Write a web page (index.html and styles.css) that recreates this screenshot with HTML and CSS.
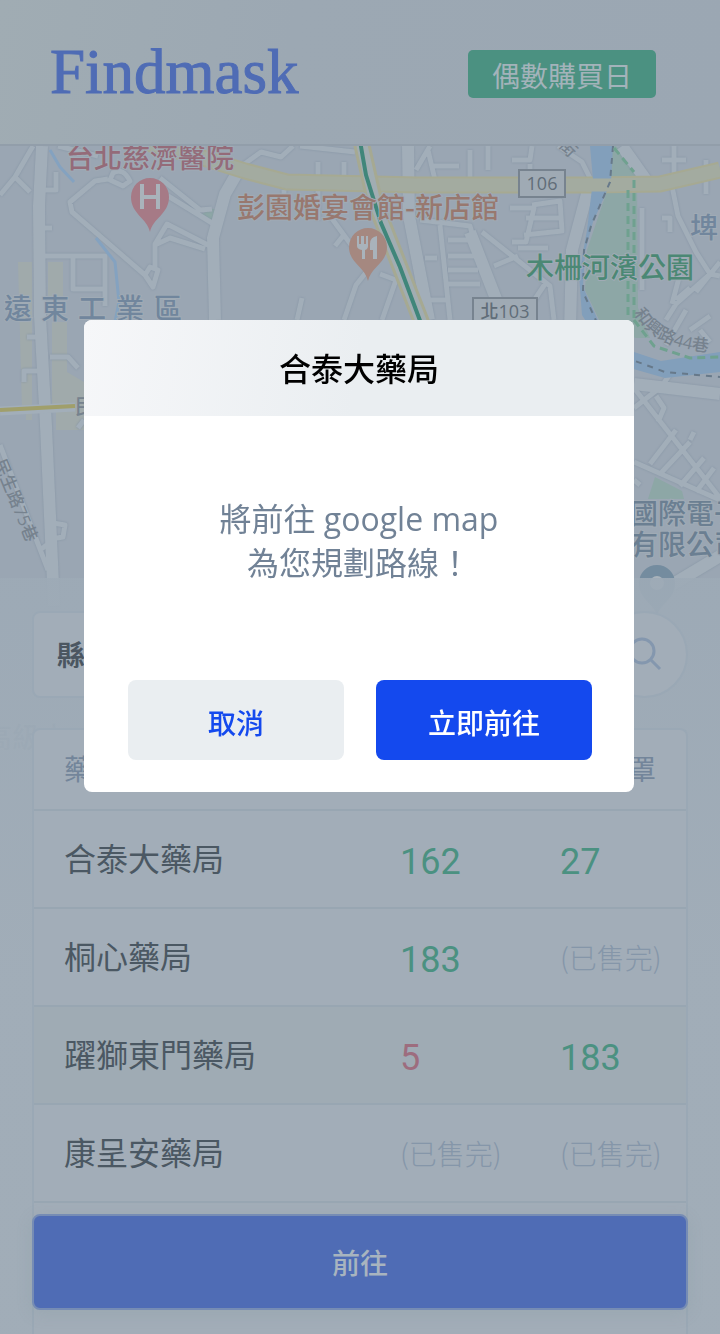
FILE: index.html
```
<!DOCTYPE html>
<html lang="zh-Hant">
<head>
<meta charset="utf-8">
<meta name="viewport" content="width=device-width, initial-scale=1">
<title>Findmask</title>
<link rel="stylesheet" href="styles.css">
</head>
<body>
<div class="app">
  <header class="topbar">
    <h1 class="brand">Findmask</h1>
    <span class="badge">偶數購買日</span>
  </header>
  <main class="stage">
    <svg class="map" viewBox="0 146 720 1188" preserveAspectRatio="xMidYMin slice" aria-label="地圖">
      <rect class="land" x="0" y="146" width="720" height="1188"/>
      <g class="patch">
        <path d="M18 262h14v158h-6v-10h-4zM48 262h15v38h-15zM52 322h15v50l17 10v48H56v-26h-4z"/>
      </g>
      <path class="park" d="M612 146h4l24 30h-3l1 132 12 30-14 0-34-12-17-36 2-40 22-65z"/>
      <path class="park" d="M197 217l13-8h5l-2 14zM655 477l27 14 2 8h-36z"/>
      <g class="roads">
        <g class="casing">
          <path d="M33 146L15 177 0 195M15 177l15 15M38 190h18v-18M38 228h14M58 146l40 10M108 179l-13 2-25 21 2 10 73 63 8 12 5-17-8-3-5 8M155 268v-24l12-20 43 22M155 245l15-7 35 11M113 173q10-6 17 8l-7 5-13-6zM160 178l40 32 12-1M168 196l44 27M45 256h60v50M73 258v31h30M27 337h14M50 357h18l10 11M24 382v-11h18M40 550l12-9 1-18 12 2-2 12-12 2M0 445l48 125M78 428l6-8"/>
          <path d="M243 165l18-13 20 5 12-11M318 162v58M344 162v22M284 190v28M330 216l22 30M335 246l8-10M368 270l-12 15-12 35M380 274l16 6-14 40M302 298l-5 22M430 146l-14 24M428 150l7 30M433 166h26M470 150v34M300 146l55 6M420 220l50 6 8 28M440 225l10 95M448 240h24M448 256h26M448 270h30M448 284h32M425 258h12M430 300h16M488 146v24M512 160h18l2-14M530 184v-20M510 208h24l-8 34h-14M532 205l28-4 2 30-38 4M526 218h36M518 248h30M482 232l68 54 4 34M494 266l24-10M545 284l-16 24M558 146l24 16 8 16M642 208v82M674 146v38M662 160h24M706 160v34M672 186l6 30 18 36 14 22 10 2M710 274l-34 30-10 16M680 274l-8 30M662 218h8v14M720 262l-24 30M690 288l-14 12"/>
          <path d="M634 388l86 110M634 408l28-22 8-12M656 396l8 12-6 14M634 462l86 38M676 430l-26 34M690 442l-30 32M704 458l-24 28M714 468l-18 24M690 440l4-8M634 480l6 5M690 330l20-14M700 330l10 12M666 345l20-35"/>
        </g>
        <g class="wide">
          <path d="M42 146l-3 60 1 110 6 110 8 180M240 168l-15 26-12 44 2 82M408 146l1 70 20 104M470 232l35 90M588 190l-16 60-2 80M622 146l24 34M634 384l86 10M720 556l-50 30"/>
        </g>
      </g>
      <path class="highway-edge" d="M140 141l60 16 45 14 42 11 130 3h172l71-1 60-14"/>
      <path class="highway" d="M140 141l60 16 45 14 42 11 130 3h172l71-1 60-14"/>
      <path class="highway-edge" d="M361 141l14 62 48 123"/>
      <path class="highway-mid" d="M361 141l14 62 48 123"/>
      <path class="rail" d="M360 141l6 34 15 48 19 44 22 59"/>
      <path class="lane-bg" d="M0 411l75-4"/><path class="lane" d="M0 410l75-4"/>
      <path class="stream" d="M50 150l10 17 14 15M96 238l19 24 4 40-4 20"/>
      <path class="river" d="M590 146h23l-2 36-18 40-8 30-2 35 18 40 30 24 30 10 59-9v20l-55 6-35-10-30-25-18-28-3-40 8-45 6-50z"/>
      <path class="highway" d="M586 185h34"/>
      <path class="river-dash" d="M613 146l-3 36-19 44-7 24-1 42 15 33 37 36 30 11 55 5"/>
      <path class="path-dash" d="M614 148l20 24M628 190v130M634 180v140M634 320l20 26 36 12 30-1"/>
      <g class="shield">
        <rect x="519" y="170" width="46" height="27"/>
        <rect x="473" y="298" width="64" height="27"/>
        <text x="542" y="190">106</text>
        <text x="505" y="318">北103</text>
      </g>
      <g class="pin pin-hospital">
        <path d="M150 232c-3-14-19-18-19-35a19 19 0 0 1 38 0c0 17-16 21-19 35z"/>
        <path class="glyph-line" d="M142 184v25M158 184v25M142 197h16"/>
      </g>
      <g class="pin pin-food">
        <path d="M368 281c-3-14-19-18-19-34a19 19 0 0 1 38 0c0 16-16 20-19 34z"/>
        <path class="glyph" d="M357 236h2v8h2v-8h3v8h2v-8h2v10q0 3-3 4v9h-3v-9q-5-1-5-4zM370 244q0-7 7-8v23h-4v-9h-3z"/>
      </g>
      <g class="pin pin-place">
        <path d="M657 616c-3-13-18-16-18-33a18 18 0 0 1 36 0c0 17-15 20-18 33z"/>
        <circle class="glyph" cx="657" cy="583" r="7"/>
      </g>
      <g class="label">
        <text class="red" x="66" y="168">台北慈濟醫院</text>
        <text class="orange" x="237" y="218">彭園婚宴會館-新店館</text>
        <text class="green" x="526" y="278">木柵河濱公園</text>
        <text class="slate" x="4 41 78 116 154" y="319">遠東工業區</text>
        <text class="slate" x="690" y="238">埤</text>
        <text class="dark" x="630" y="524">國際電子</text>
        <text class="dark" x="630" y="555">有限公司</text>
        <text class="dark" x="-16" y="748">高級中</text>
      </g>
      <g class="street">
        <path id="curve" class="guide" d="M634 313Q656 352 720 352"/>
        <text><textPath href="#curve">和興路44巷</textPath></text>
        <text transform="translate(-6 462) rotate(68)">民生路75巷</text>
        <text transform="translate(558 146) rotate(45)">街</text>
        <text class="street-big" x="75" y="414">民</text>
      </g>
    </svg>
    <section class="panel">
      <form class="filters">
        <select class="city" aria-label="縣市"><option>縣市</option></select>
        <button class="search" type="button" aria-label="搜尋">
          <svg viewBox="0 0 40 40" aria-hidden="true"><circle cx="17" cy="16" r="12"/><path d="M26 25l9 9"/></svg>
        </button>
      </form>
      <div class="card">
        <table class="stores">
          <thead><tr><th>藥局</th><th class="count">成人口罩</th><th class="count">兒童口罩</th></tr></thead>
          <tbody>
            <tr><td>合泰大藥局</td><td class="num">162</td><td class="num">27</td></tr>
            <tr><td>桐心藥局</td><td class="num">183</td><td class="none">(已售完)</td></tr>
            <tr class="active"><td>躍獅東門藥局</td><td class="num low">5</td><td class="num">183</td></tr>
            <tr><td>康呈安藥局</td><td class="none">(已售完)</td><td class="none">(已售完)</td></tr>
          </tbody>
        </table>
      </div>
    </section>
  </main>
  <button class="go" type="button">前往</button>
</div>
<div class="overlay">
  <section class="dialog" role="dialog" aria-modal="true" aria-labelledby="dialog-title">
    <h2 class="dialog-title" id="dialog-title">合泰大藥局</h2>
    <p class="dialog-text">將前往 google map<br>為您規劃路線！</p>
    <div class="actions">
      <button class="btn cancel" type="button">取消</button>
      <button class="btn confirm" type="button">立即前往</button>
    </div>
  </section>
</div>
</body>
</html>
```
FILE: styles.css
```
* { box-sizing: border-box; }
body {
  margin: 0;
  font-family: "Open Sans", "Noto Sans CJK TC", sans-serif;
  background: #a1adb7;
}
button, select { font: inherit; border: 0; padding: 0; }
.app {
  position: relative;
  min-height: 100vh;
  display: flex;
  flex-direction: column;
}
.topbar {
  display: flex;
  align-items: flex-start;
  justify-content: space-between;
  height: 146px;
  padding: 50px 64px 0 50px;
  background: linear-gradient(100deg, #a0acb3, #9ca8b3 40%, #9ba7b3);
  border-bottom: 2px solid #929eaa;
}
.brand {
  margin: 0;
  font: 400 63px/44px "Liberation Serif", serif;
  color: #4f6cb5;
  -webkit-text-stroke: 1px #4f6cb5;
}
.badge {
  height: 48px;
  padding: 0 24px;
  border-radius: 5px;
  background: #4b9181;
  color: #a3b3ba;
  font-family: "Noto Sans CJK TC", sans-serif;
  font-size: 28px;
  line-height: 50px;
}

/* Map */
.stage {
  position: relative;
  flex: 1;
  display: flex;
  flex-direction: column;
  padding-top: 432px;
}
.map {
  position: absolute;
  inset: 0;
  width: 100%;
  height: 100%;
}
.map path { fill: none; stroke-linejoin: round; }
.map .land { fill: #9aa6b3; }
.map .patch path { fill: #a0aaab; }
.map .park { fill: #8da7a6; }
.roads { filter: drop-shadow(0 0 1px #8493a3); }
.casing path { stroke: #a2aeb9; stroke-width: 5; }
.wide path { stroke: #a2aeb9; stroke-width: 12; }
.map .highway-edge { stroke: #a6a992; stroke-width: 17; }
.map .highway { stroke: #a3aba0; stroke-width: 13; }
.map .highway-mid { stroke: #a1adb2; stroke-width: 11; }
.map .rail { stroke: #40867a; stroke-width: 4; }
.map .lane-bg { stroke: #a2aeb9; stroke-width: 9; }
.map .lane { stroke: #a09f6b; stroke-width: 4; }
.map .stream { stroke: #84a2c0; stroke-width: 3; }
.map .river { fill: #829fbb; }
.map .river-dash { stroke: #67798a; stroke-width: 2; stroke-dasharray: 6 6; }
.map .path-dash { stroke: #6fa18f; stroke-width: 3; stroke-dasharray: 8 5; }
.shield rect { fill: #9faab4; stroke: #77838f; stroke-width: 2; }
.shield text {
  fill: #616d78;
  font-size: 18px;
  font-weight: 500;
  text-anchor: middle;
}
.map .pin-hospital path { fill: #a67a86; }
.map .pin-food path { fill: #a58880; }
.map .pin-place path { fill: #748c9f; }
.map .pin .glyph { fill: #a9b3bb; }
.map .pin .glyph-line { fill: none; stroke: #a9b3bb; stroke-width: 4; }
.label { font-size: 28px; font-weight: 500; font-family: "Noto Sans CJK TC", sans-serif; }
.label text { paint-order: stroke; stroke: #a0abb5; stroke-width: 2px; }
.label .red { fill: #946b79; }
.label .orange { fill: #98786f; }
.label .green { fill: #4b8874; }
.label .slate { fill: #71869d; }
.label .dark { fill: #6b7f92; }
.street { fill: #76828e; font-size: 17px; font-weight: 500; }
.street .street-big { font-size: 20px; }

/* Search and results */
.panel {
  position: relative;
  flex: 1;
  display: flex;
  flex-direction: column;
  gap: 32px;
  padding: 33px 32px 0;
  background: linear-gradient(rgba(157, 170, 182, .92), rgba(161, 173, 184, .98) 400px);
}
.filters { display: flex; justify-content: space-between; gap: 24px; }
.city {
  flex: 0 1 540px;
  height: 87px;
  padding: 0 23px;
  border: 2px solid #9aa8b5;
  border-radius: 8px;
  background: #a2adb8;
  color: #4b5661;
  font-size: 28px;
  font-weight: 700;
  appearance: none;
}
.search {
  width: 87px;
  height: 87px;
  border: 2px solid #9aa8b5;
  border-radius: 50%;
  background: #a2adb8;
}
.search svg {
  display: block;
  width: 40px;
  height: 40px;
  margin: 0 auto;
  fill: none;
  stroke: #8497ae;
  stroke-width: 3;
}
.card {
  flex: 1;
  margin-top: -2px;
  border: 2px solid #9aa8b5;
  border-bottom: 0;
  border-radius: 8px 8px 0 0;
  background: #a2adb8;
}
.stores {
  width: 100%;
  border-collapse: collapse;
  table-layout: fixed;
  font-family: "Noto Sans CJK TC", sans-serif;
  font-size: 32px;
  line-height: 48px;
  color: #4b5863;
}
.stores th, .stores td {
  height: 98px;
  padding: 0 0 4px;
  border-bottom: 2px solid #98a6b2;
  text-align: left;
}
.stores th { height: 80px; font-size: 28px; font-weight: 400; color: #73859a; white-space: nowrap; }
.stores th:first-child, .stores td:first-child { padding-left: 30px; }
.stores .count { width: 160px; }
.stores .count:last-child { width: 126px; padding-right: 30px; direction: rtl; text-align: right; }
.active { background: #9fabb4; }
.stores .num { padding: 6px 0 0; font-family: Roboto, sans-serif; font-size: 36px; color: #4b9181; }
.stores .low { color: #9d6d7e; }
.stores .none { padding: 0; font-size: 28px; font-weight: 300; color: #8596a9; white-space: nowrap; }
.go {
  position: absolute;
  left: 32px;
  right: 32px;
  bottom: 24px;
  height: 96px;
  border: 2px solid #768cb4;
  border-radius: 8px;
  background: #4f6cb5;
  color: #a8b4bf;
  font-size: 28px;
  font-weight: 500;
  box-shadow: 0 4px 16px rgba(120, 145, 150, .2);
}

/* Dialog */
.overlay {
  position: fixed;
  inset: 0;
  padding: 320px 86px 0 84px;
}
.dialog {
  overflow: hidden;
  border-radius: 8px;
  background: #fff;
}
.dialog-title {
  margin: 0;
  padding-top: 2px;
  background: linear-gradient(100deg, #f6f7f9, #eaeef1 50%);
  color: #000;
  font-size: 32px;
  font-weight: 500;
  line-height: 94px;
  text-align: center;
}
.dialog-text {
  margin: 0;
  padding: 81px 24px 95px;
  color: #718296;
  font-size: 32px;
  line-height: 44px;
  text-align: center;
}
.actions { display: flex; gap: 32px; padding: 0 42px 32px 44px; }
.btn {
  flex: 1;
  height: 80px;
  padding-top: 3px;
  border-radius: 8px;
  font-size: 28px;
  font-weight: 500;
}
.cancel { background: #eaeef1; color: #1449ee; }
.confirm { background: #1449ee; color: #fff; }
```
